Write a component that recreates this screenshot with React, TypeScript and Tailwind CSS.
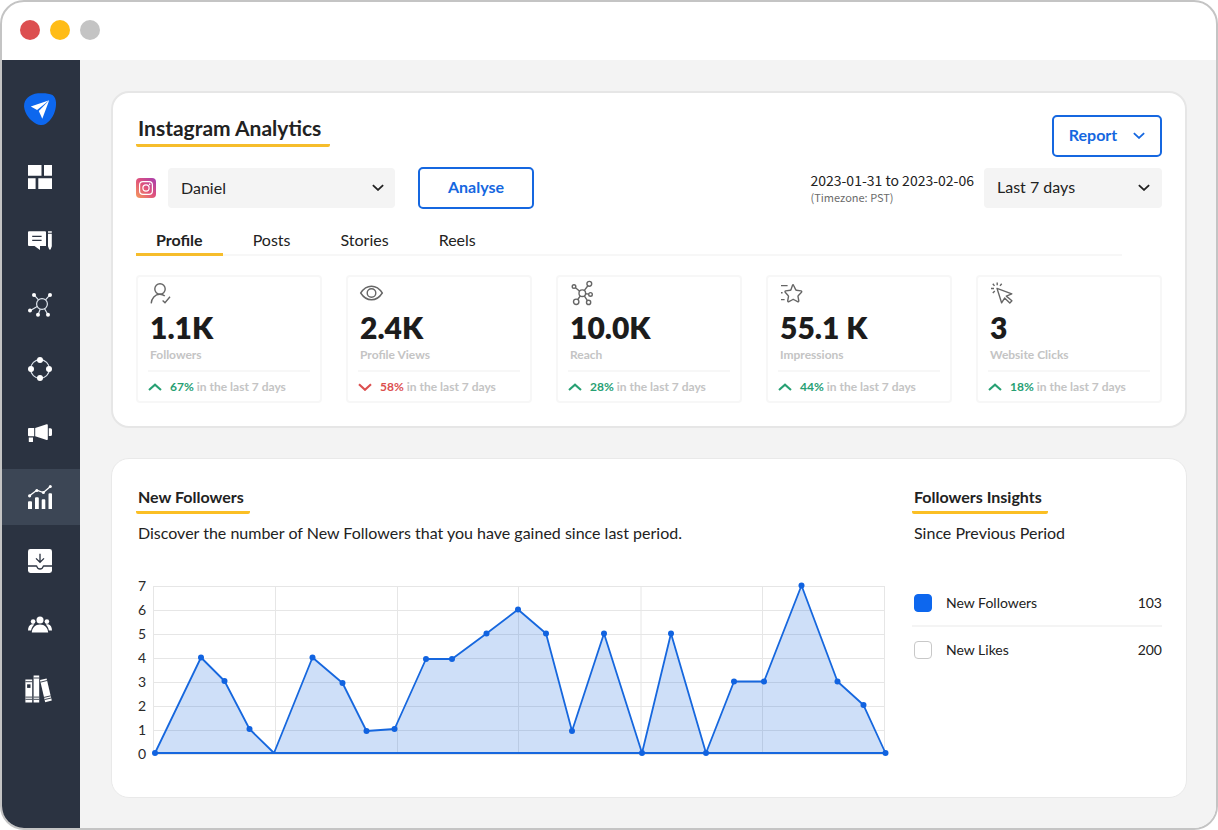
import type { ReactNode } from 'react';

const FONT = "font-['Lato','Open_Sans',sans-serif]";

interface NavItem {
  label: string;
  icon: ReactNode;
}

interface Stat {
  label: string;
  value: string;
  change: string;
  up: boolean;
  icon: ReactNode;
}

const NAV: NavItem[] = [
  {
    label: 'Dashboard',
    icon: (
      <path fill="#fff" d="M0 0h13.5v10.7H0zM16 0h8v10.7h-8zM0 13.3h7.6V24H0zM10.3 13.3H24V24H10.3z" />
    ),
  },
  {
    label: 'Publishing',
    icon: (
      <>
        <path fill="#fff" d="M1 2.2h16q1 0 1 1V17h-6v4l-5.5-4H1q-1 0-1-1V3.2q0-1 1-1zM20 2.2h3.8v1.5H20zM20 4.8h3.8v12.4l-1.2 3.4h-1.4L20 17.2z" />
        <path stroke="#2b3341" strokeWidth="1.2" d="M4.2 7.4h9.4M4.2 11.4h9.4" />
      </>
    ),
  },
  {
    label: 'Network',
    icon: (
      <>
        <g fill="none" stroke="#dfe6ee" strokeWidth="1.2">
          <circle cx="14" cy="11" r="5.4" />
          <path d="M10.5 6.8 6 1.8M17.5 6.8 22 1.8M9.2 13.6 2 17.8M12.2 16.2 10 21.8M16.6 15.8 20 21.8" />
        </g>
        <g fill="#fff">
          <circle cx="6" cy="2" r="2" />
          <circle cx="22" cy="2" r="2" />
          <circle cx="2" cy="17.6" r="2" />
          <circle cx="10" cy="21.8" r="2" />
          <circle cx="20" cy="21.8" r="2" />
        </g>
      </>
    ),
  },
  {
    label: 'Automation',
    icon: (
      <>
        <circle cx="12" cy="12" r="9.4" fill="none" stroke="#dfe6ee" strokeWidth="1.1" />
        <g fill="#fff">
          <circle cx="12" cy="3" r="3" />
          <circle cx="21" cy="12" r="3" />
          <circle cx="12" cy="21" r="3" />
          <circle cx="3" cy="12" r="3" />
        </g>
      </>
    ),
  },
  {
    label: 'Campaigns',
    icon: (
      <path fill="#fff" d="M1 7h5.2v8.3H1q-1 0-1-1V8q0-1 1-1zM7.2 7 18.6 3.2q1.2-.3 1.2.7v14.4q0 1-1.2.7L7.2 15.3zM20.8 7.2h1.7q1.5 0 1.5 1.5v4.8q0 1.5-1.5 1.5h-1.7zM.8 16.4H5v4.2q0 .5-.5.5H1.3q-.5 0-.5-.5z" />
    ),
  },
  {
    label: 'Analytics',
    icon: (
      <>
        <path fill="#fff" d="M0 17.2q0-1 1-1h2q1 0 1 1V24H0zM7 13.2q0-1 1-1h1.8q1 0 1 1V24H7zM13.7 15.2q0-1 1-1h1.6q1 0 1 1V24h-3.6zM20.5 9.2q0-1 1-1H23q1 0 1 1V24h-3.5z" />
        <path fill="none" stroke="#fff" strokeWidth="1.3" d="m1.5 10.8 7.3-5.6 6.6 2.4 7-6.2" />
        <g fill="#fff">
          <circle cx="1.6" cy="10.8" r="1.6" />
          <circle cx="8.8" cy="5.4" r="1.5" />
          <circle cx="15.4" cy="7.6" r="1.5" />
          <circle cx="22.3" cy="1.5" r="1.5" />
        </g>
      </>
    ),
  },
  {
    label: 'Inbox',
    icon: (
      <>
        <rect width="24" height="24" rx="2.4" fill="#fff" />
        <g fill="none" stroke="#2b3341" strokeWidth="1.3">
          <path d="M0 17h8.3c.3 0 .5.2.6.6.5 1.5 1.6 2.4 3.1 2.4s2.6-.9 3.1-2.4c.1-.4.3-.6.6-.6H24" />
          <path d="M12 4.8v8.4M8 9.4l4 3.9 4-3.9" />
        </g>
      </>
    ),
  },
  {
    label: 'Team',
    icon: (
      <g fill="#fff">
        <circle cx="12" cy="7" r="3.5" />
        <circle cx="5.1" cy="8.6" r="2.3" />
        <circle cx="18.9" cy="8.6" r="2.3" />
        <path d="M3.8 19.6c.3-5 3.5-8.2 8.2-8.2s7.9 3.2 8.2 8.2zM0 17.6c0-3.4 1.4-5.8 3.8-6.3.9-.1 1.8 0 2.4.5-1.6 1.3-2.7 3.2-3.1 5.8zM24 17.6c0-3.4-1.4-5.8-3.8-6.3-.9-.1-1.8 0-2.4.5 1.6 1.3 2.7 3.2 3.1 5.8z" />
      </g>
    ),
  },
  {
    label: 'Library',
    icon: (
      <>
        <g fill="#fff">
          <path d="M-2.6 2.4h6.8v23h-6.8zM5.6-1.4h5.6v26.8H5.6z" />
          <path d="m12 3 6.6-1.6 5.2 22.2-6.6 1.7z" />
        </g>
        <g fill="none" stroke="#2b3341" strokeWidth=".9">
          <path d="M-2.6 4.7h6.8M-2.6 20.1h6.8M-2.6 22.3h6.8M5.6 1h5.6M5.6 20.1h5.6M5.6 22.3h5.6M12.4 5.2l6.6-1.7M16 20.4l6.8-1.6M16.5 22.6l6.8-1.6" />
        </g>
        <path fill="#2b3341" d="M-.9 7.3h3.4v3.6H-.9z" />
      </>
    ),
  },
];

const STATS: Stat[] = [
  {
    label: 'Followers',
    value: '1.1K',
    change: '67%',
    up: true,
    icon: (
      <>
        <circle cx="10" cy="8" r="5.2" />
        <path d="M1.2 22.4c.3-5.2 3.800-9.100 8.600-9.100 2.200 0 3.700.6 5 1.800M12.600 19.400l2.400 2.400 5-6" />
      </>
    ),
  },
  {
    label: 'Profile Views',
    value: '2.4K',
    change: '58%',
    up: false,
    icon: (
      <>
        <path d="M.7 12c2.8-4.4 6.5-6.8 10.8-6.8s8 2.4 10.8 6.8c-2.8 4.4-6.5 6.8-10.8 6.8S3.5 16.4.7 12z" />
        <circle cx="11.5" cy="12" r="4.3" />
      </>
    ),
  },
  {
    label: 'Reach',
    value: '10.0K',
    change: '28%',
    up: true,
    icon: (
      <>
        <circle cx="12.3" cy="12.2" r="3.3" />
        <circle cx="4" cy="5.6" r="1.8" />
        <circle cx="19.3" cy="2.8" r="2.4" />
        <circle cx="20.5" cy="13.4" r="1.8" />
        <circle cx="6.2" cy="20.8" r="2.7" />
        <circle cx="18.6" cy="21.4" r="2.1" />
        <path d="m5.5 6.8 4.2 3.4M17.9 4.8l-3.7 4.8M15.6 12.7l3.1.4M10.3 14.9l-2.5 3.6M14.3 14.9l3.1 4.7" />
      </>
    ),
  },
  {
    label: 'Impressions',
    value: '55.1 K',
    change: '44%',
    up: true,
    icon: (
      <>
        <path d="m13.5 4.200 2.300 4.700c.1.200.3.400.6.400l4.600.6c.7.100 1 .9.500 1.400l-3.300 3.400c-.2.200-.3.400-.2.700l.8 4.400c.1.700-.6 1.200-1.200.9l-4-2.200c-.2-.1-.5-.1-.7 0l-4 2.200c-.6.300-1.300-.2-1.200-.9l.8-4.400c0-.3 0-.5-.2-.7L5.200 11.300c-.5-.5-.2-1.300.5-1.400l4.600-.6c.3 0 .5-.2.6-.4l1.600-4.700c.3-.6.800-.6 1 0z" />
        <path d="M1 4.600h6.600M1 11.800h1.600M1 18.600h3.600" />
      </>
    ),
  },
  {
    label: 'Website Clicks',
    value: '3',
    change: '18%',
    up: true,
    icon: (
      <>
        <path d="m7 7.4 14.8 5.4-5.5 2.3 5.6 4.6-2.1 2.4-5.2-5-3 4.7z" strokeLinejoin="round" />
        <path d="M7.2 1.6v2.6M2.8 2.8l1.7 2.1M11.7 2.8 10 4.9M1 7.5h3M4.8 10l-2 1.9" />
      </>
    ),
  },
];

const TABS = ['Profile', 'Posts', 'Stories', 'Reels'];

// x, y and whether the point carries a marker
const POINTS: [number, number, boolean][] = [
  [19, 175, true],
  [65, 79.5, true],
  [88.5, 103, true],
  [113.5, 151, true],
  [138, 175, false],
  [176.5, 79.5, true],
  [206.5, 105, true],
  [230.5, 153, true],
  [258.5, 151, true],
  [290, 81, true],
  [316, 81, true],
  [350.5, 55.5, true],
  [382, 31.5, true],
  [410, 55.5, true],
  [436, 153, true],
  [468, 55.5, true],
  [506, 175, true],
  [535, 55.5, true],
  [570, 175, true],
  [598, 103.5, true],
  [628, 103.5, true],
  [665.5, 7.5, true],
  [701.5, 103.5, true],
  [727.5, 127, true],
  [749.5, 175, true],
];

function Chevron({ className, up = false }: { className: string; up?: boolean }) {
  return (
    <svg viewBox="0 0 14 8" className={className} fill="none" stroke="currentColor" strokeWidth="2.1" aria-hidden="true">
      <path d={up ? 'm1 7 6-5.4L13 7' : 'm1 1.2 6 5.6 6-5.6'} />
    </svg>
  );
}

function Logo() {
  return (
    <svg viewBox="0 0 32 32" className="h-8 w-8" aria-hidden="true">
      <path fill="#0d67ee" d="M14 .3C19 0 25 0 28.500 2 32 4.500 32.400 9 31.800 14 31 21 27 27.500 22 30.700c-3 1.800-6.500 1.600-9.500.3C6 27.500.8 21 .1 14-.5 7 5 1.200 14 .3z" />
      <path fill="#fff" d="M25.200 7.200 6.800 13.400l6.300 3.700z" />
      <path fill="#fff" d="M25.200 7.200 14.800 18l3.500 7.700z" />
    </svg>
  );
}

function InstagramIcon() {
  return (
    <svg viewBox="0 0 20 20" className="h-5 w-5 shrink-0" aria-hidden="true">
      <defs>
        <linearGradient id="ig" x1="0" y1="1" x2="1" y2="0">
          <stop offset="0" stopColor="#f59a5c" />
          <stop offset=".5" stopColor="#e0527c" />
          <stop offset="1" stopColor="#a63db0" />
        </linearGradient>
      </defs>
      <rect width="20" height="20" rx="4" fill="url(#ig)" />
      <g fill="none" stroke="#fff" strokeWidth="1.2">
        <rect x="3.6" y="3.6" width="12.8" height="12.8" rx="3.4" />
        <circle cx="10" cy="10" r="3.1" />
      </g>
      <circle cx="13.6" cy="6.4" r=".8" fill="#fff" />
    </svg>
  );
}

function Sidebar() {
  return (
    <aside className="w-[78px] shrink-0 bg-[#2b3341]">
      <a href="#home" aria-label="Home" className="mt-[33px] flex justify-center pr-[2px]">
        <Logo />
      </a>
      <nav className="mt-6 flex flex-col gap-2">
        {NAV.map((item) => (
          <a
            key={item.label}
            href={`#${item.label.toLowerCase()}`}
            aria-label={item.label}
            className={`flex h-14 items-center justify-center pr-[2px] ${item.label === 'Analytics' ? 'bg-[#3c4655]' : ''}`}
          >
            <svg viewBox="0 0 24 24" className="h-6 w-6 overflow-visible">
              {item.icon}
            </svg>
          </a>
        ))}
      </nav>
    </aside>
  );
}

function StatCard({ stat }: { stat: Stat }) {
  return (
    <article className="rounded border-2 border-[#f7f7f7] px-[10px] pt-1">
      <svg
        viewBox="0 0 24 24"
        className="ml-[2px] h-6 w-6 overflow-visible"
        fill="none"
        stroke="#666"
        strokeWidth="1.4"
        aria-hidden="true"
      >
        {stat.icon}
      </svg>
      <p className="mt-1 pl-[2px] text-[30px] leading-9 font-extrabold text-[#1c1c1c]">{stat.value}</p>
      <p className="mt-[2px] pl-[2px] text-xs leading-4 font-bold text-[#c4c4c4]">{stat.label}</p>
      <div className="mt-[7px] flex h-[31px] items-center border-t-2 border-[#f7f7f7] text-xs font-bold text-[#c4c4c4]">
        <Chevron up={stat.up} className={`mr-2 h-2 w-[14px] ${stat.up ? 'text-[#27a073]' : 'text-[#dc4f4f]'}`} />
        <span className={`mr-[3px] ${stat.up ? 'text-[#27a073]' : 'text-[#dc4f4f]'}`}>{stat.change}</span>
        in the last 7 days
      </div>
    </article>
  );
}

function Overview() {
  return (
    <section className="rounded-[18px] border-2 border-[#e6e6e6] bg-white px-[23px] pt-[22px] pb-[23px]">
      <div className="flex items-start justify-between">
        <h1 className="rounded-xs border-b-3 border-[#f6bd2b] pr-[9px] pb-[3px] pl-[2px] text-[21px] leading-[26px] font-bold">
          Instagram Analytics
        </h1>
        <button
          type="button"
          className="flex h-[42px] w-[110px] items-center justify-center gap-4 rounded-[5px] border-2 border-[#1567e0] pb-[3px] text-base font-bold text-[#1567e0]"
        >
          Report
          <Chevron className="mt-[2px] h-[7px] w-3" />
        </button>
      </div>

      <div className="mt-[10px] flex items-center">
        <InstagramIcon />
        <div className="relative ml-3">
          <select aria-label="Profile" className="h-10 w-[227px] appearance-none rounded bg-[#f4f4f4] px-[13px] text-base">
            <option>Daniel</option>
          </select>
          <Chevron className="pointer-events-none absolute top-4 right-[11px] h-[7px] w-3" />
        </div>
        <button
          type="button"
          className="ml-[23px] h-[42px] w-[116px] rounded-[5px] border-2 border-[#1567e0] pb-[3px] text-base font-bold text-[#1567e0]"
        >
          Analyse
        </button>
        <div className="mr-[10px] ml-auto pb-[2px] font-['Noto_Sans_CJK_SC',sans-serif]">
          <p className="text-sm leading-5">2023-01-31 to 2023-02-06</p>
          <p className="text-[11px] leading-[14px] text-[#6b6b6b]">(Timezone: PST)</p>
        </div>
        <div className="relative">
          <select aria-label="Date range" className="h-10 w-[178px] appearance-none rounded bg-[#f4f4f4] px-[13px] pb-[3px] text-base">
            <option>Last 7 days</option>
          </select>
          <Chevron className="pointer-events-none absolute top-4 right-3 h-[7px] w-3" />
        </div>
      </div>

      <div role="tablist" className="mr-10 flex h-[47px] items-end gap-[10px] border-b-2 border-[#f7f7f7]">
        {TABS.map((tab, i) => (
          <button
            key={tab}
            type="button"
            role="tab"
            aria-selected={i === 0}
            className={`-mb-[2px] border-b-3 px-5 pb-[1px] text-base leading-6 ${
              i === 0 ? 'border-[#f6bd2b] font-bold' : 'border-transparent'
            }`}
          >
            {tab}
          </button>
        ))}
      </div>

      <div className="mt-[19px] grid grid-cols-5 gap-6">
        {STATS.map((stat) => (
          <StatCard key={stat.label} stat={stat} />
        ))}
      </div>
    </section>
  );
}

function FollowersChart() {
  const line = POINTS.map(([x, y]) => `${x},${y}`).join(' ');
  return (
    <svg viewBox="0 0 752 184" className="mt-[33px] w-full overflow-visible" role="img" aria-label="New followers per day">
      <g stroke="#e6e6e6">
        {[0, 1, 2, 3, 4, 5, 6, 7].map((n) => (
          <line key={n} x1="17" x2="749" y1={176.5 - n * 24} y2={176.5 - n * 24} />
        ))}
        {[17.5, 139.5, 261.5, 382.5, 505, 626.5, 748.5].map((x) => (
          <line key={x} x1={x} x2={x} y1="8" y2="176" />
        ))}
      </g>
      <g fontSize="14" fill="#2a2a2a">
        {[0, 1, 2, 3, 4, 5, 6, 7].map((n) => (
          <text key={n} x="2" y={181 - n * 24}>
            {n}
          </text>
        ))}
      </g>
      <polygon points={line} fill="#1667de" fillOpacity=".21" stroke="#1667de" strokeWidth="1.8" strokeLinejoin="round" />
      <g fill="#1163e0">
        {POINTS.filter((p) => p[2]).map(([x, y]) => (
          <circle key={x} cx={x} cy={y} r="3" />
        ))}
      </g>
    </svg>
  );
}

function Heading({ children }: { children: ReactNode }) {
  return (
    <h2 className="w-fit rounded-xs border-b-3 border-[#fbbf24] pr-[6px] pb-[2px] pl-[2px] text-base leading-6 font-bold">
      {children}
    </h2>
  );
}

function InsightRow({ label, value, checked = false }: { label: string; value: number; checked?: boolean }) {
  return (
    <label className="flex h-[46px] items-center text-sm">
      <input
        type="checkbox"
        defaultChecked={checked}
        className="mr-[14px] ml-[2px] size-[18px] appearance-none rounded border border-[#c8c8c8] bg-white checked:border-[#0d67ee] checked:bg-[#0d67ee]"
      />
      {label}
      <span className="ml-auto">{value}</span>
    </label>
  );
}

function NewFollowers() {
  return (
    <section className="grid grow grid-cols-[1fr_250px] gap-6 rounded-[18px] border border-[#e9e9e9] bg-white px-6 pt-[26px] pb-8">
      <div>
        <Heading>New Followers</Heading>
        <p className="mt-[7px] pl-[2px] text-base leading-6">
          Discover the number of New Followers that you have gained since last period.
        </p>
        <FollowersChart />
      </div>
      <div>
        <Heading>Followers Insights</Heading>
        <p className="mt-[7px] pl-[2px] text-base leading-6">Since Previous Period</p>
        <div className="mt-9 divide-y-2 divide-[#f4f4f4]">
          <InsightRow label="New Followers" value={103} checked />
          <InsightRow label="New Likes" value={200} />
        </div>
      </div>
    </section>
  );
}

export default function App() {
  return (
    <div className={`flex min-h-screen flex-col overflow-hidden rounded-3xl border-2 border-[#c4c4c4] bg-white text-[#222] ${FONT}`}>
      <header className="flex h-[58px] items-center gap-[10px] px-[18px] pb-[2px]">
        <span className="size-5 rounded-full bg-[#dc4f50]" />
        <span className="size-5 rounded-full bg-[#ffbc16]" />
        <span className="size-5 rounded-full bg-[#c4c4c4]" />
      </header>
      <div className="flex grow">
        <Sidebar />
        <main className="flex min-w-0 grow flex-col gap-[30px] bg-[#f3f3f3] pt-[31px] pr-[29px] pb-[30px] pl-[31px]">
          <Overview />
          <NewFollowers />
        </main>
      </div>
    </div>
  );
}
